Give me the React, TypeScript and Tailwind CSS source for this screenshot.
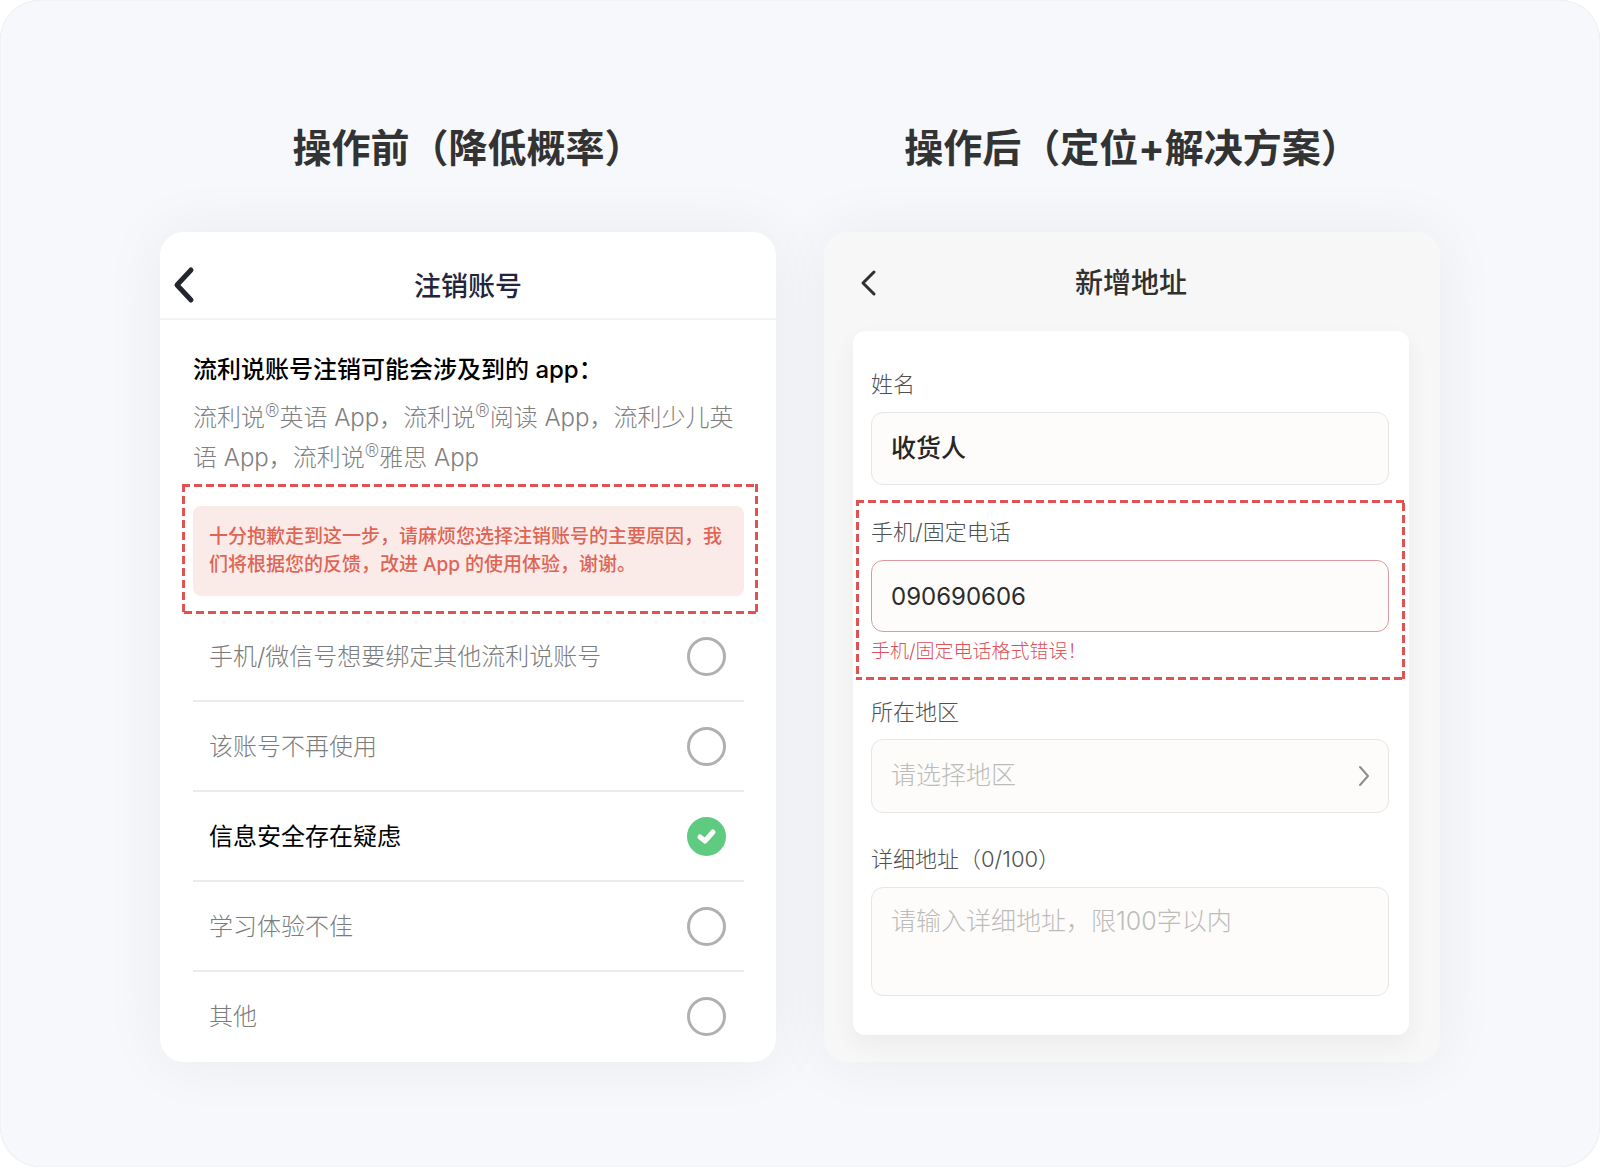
import { useState } from "react";
import type { ReactNode } from "react";

const reasons = [
  "手机/微信号想要绑定其他流利说账号",
  "该账号不再使用",
  "信息安全存在疑虑",
  "学习体验不佳",
  "其他",
];

function Highlight({ className, children }: { className: string; children: ReactNode }) {
  return (
    <div className={`relative ${className}`}>
      <svg className="pointer-events-none absolute inset-0 h-full w-full overflow-hidden" aria-hidden="true">
        <rect width="100%" height="100%" fill="none" stroke="#df5352" strokeWidth="6" strokeDasharray="8 4" />
      </svg>
      {children}
    </div>
  );
}

function Sup() {
  return <sup className="top-0 align-[9px] font-['Roboto',sans-serif] text-lg leading-none">®</sup>;
}

function BeforePanel() {
  const [selected, setSelected] = useState(2);
  return (
    <section className="flex flex-1 flex-col overflow-hidden rounded-3xl bg-white">
      <header className="grid h-22 grid-cols-[1fr_auto_1fr] items-center border-b-2 border-[#f2f3f4] px-3 pt-5">
        <button type="button" aria-label="返回" className="justify-self-start">
          <svg width="24" height="38" viewBox="0 0 24 38" fill="none" stroke="#23262f" strokeWidth="5" strokeLinecap="round" strokeLinejoin="round">
            <path d="M19 4 5 19l14 15" />
          </svg>
        </button>
        <h2 className="pt-1 text-[27px] leading-9 font-medium text-[#23263a]">注销账号</h2>
      </header>
      <div className="px-[33px] pt-8">
        <h3 className="text-2xl leading-9 font-medium text-black">流利说账号注销可能会涉及到的 app：</h3>
        <p className="mt-2.5 text-2xl leading-10 font-light whitespace-nowrap text-[#808080]">
          流利说<Sup />英语 App，流利说<Sup />阅读 App，流利少儿英
          <br />
          语 App，流利说<Sup />雅思 App
        </p>
      </div>
      <Highlight className="mt-[6px] mr-[18px] ml-[22px] pt-[22px] pr-[14px] pb-[18px] pl-[11px]">
        <p className="h-[90px] rounded-lg bg-[#fbebe8] px-4 pt-[17px] text-[19px] leading-7 font-medium text-[#de6556]">
          十分抱歉走到这一步，请麻烦您选择注销账号的主要原因，我们将根据您的反馈，改进 App 的使用体验，谢谢。
        </p>
      </Highlight>
      <div role="radiogroup" aria-label="注销原因" className="pr-8 pl-[33px]">
        {reasons.map((reason, i) => (
          <label
            key={reason}
            className="flex items-center justify-between border-b-2 border-[#ebebeb] pt-[25px] pr-[18px] pb-6 pl-4 text-2xl leading-[39px] font-light text-[#7c7c7c] first:pt-[23px] last:border-0 last:pb-[26px] has-checked:font-normal has-checked:text-black"
          >
            {reason}
            <span className="relative flex h-[39px] items-center">
              <input
                type="radio"
                name="reason"
                checked={selected === i}
                onChange={() => setSelected(i)}
                className="size-[39px] appearance-none rounded-full border-3 border-[#b0b0b0] checked:border-[#5fcb80] checked:bg-[#5fcb80]"
              />
              {selected === i && (
                <svg className="pointer-events-none absolute inset-0" width="39" height="39" viewBox="0 0 39 39" fill="none" stroke="#fff" strokeWidth="5" strokeLinecap="round" strokeLinejoin="round">
                  <path d="m13 20 5 4 8-9" />
                </svg>
              )}
            </span>
          </label>
        ))}
      </div>
    </section>
  );
}

const labelStyle = "block text-[22px] leading-8 font-light text-[#505050]";
const fieldStyle =
  "block w-full appearance-none rounded-xl border bg-[#fdfcfa] px-[19px] outline-none placeholder:text-[#bcbcba] placeholder:opacity-100";

function AfterPanel() {
  return (
    <section className="flex flex-1 flex-col rounded-3xl bg-[#f7f7f7] pr-[31px] pb-[27px] pl-[29px]">
      <header className="grid h-[99px] grid-cols-[1fr_auto_1fr] items-center px-1.5 pt-0.5">
        <button type="button" aria-label="返回" className="justify-self-start">
          <svg width="22" height="32" viewBox="0 0 22 32" fill="none" stroke="#303030" strokeWidth="3" strokeLinecap="round" strokeLinejoin="round">
            <path d="M15 5 4 16l11 11" />
          </svg>
        </button>
        <h2 className="text-[28px] leading-10 font-medium text-[#303030]">新增地址</h2>
      </header>
      <form className="rounded-xl bg-white pt-[37px] pb-[39px] shadow-[0_10px_24px_rgba(0,0,0,0.05)]">
        <div className="pr-5 pl-[18px]">
          <label htmlFor="name" className={labelStyle}>姓名</label>
          <input id="name" type="text" defaultValue="收货人" className={`${fieldStyle} mt-3 h-[73px] border-[#e6e6e4] pb-1.5 text-[25px] font-medium text-[#262626]`} />
        </div>
        <Highlight className="mt-[15px] mr-1 ml-[3px] pt-4 pr-4 pb-[14px] pl-[15px]">
          <label htmlFor="phone" className={labelStyle}>手机/固定电话</label>
          <input
            id="phone"
            type="tel"
            defaultValue="090690606"
            aria-invalid="true"
            aria-describedby="phone-error"
            className={`${fieldStyle} mt-3 h-[72px] border-[#dc99a2] text-2xl text-[#2c2c2c]`}
          />
          <p id="phone-error" className="mt-1.5 text-[19px] leading-7 font-light text-[#dc5058]">手机/固定电话格式错误！</p>
        </Highlight>
        <div className="mt-4 pr-5 pl-[18px]">
          <label htmlFor="region" className={labelStyle}>所在地区</label>
          <div className="relative mt-[11px]">
            <select id="region" defaultValue="" className={`${fieldStyle} h-[74px] border-[#e6e6e4] text-[25px] font-light text-[#bcbcba]`}>
              <option value="">请选择地区</option>
            </select>
            <svg className="pointer-events-none absolute top-1/2 right-4 -translate-y-1/2" width="18" height="24" viewBox="0 0 18 24" fill="none" stroke="#8c8c8c" strokeWidth="2" strokeLinecap="round" strokeLinejoin="round">
              <path d="m5 3 8 9-8 9" />
            </svg>
          </div>
        </div>
        <div className="mt-[30px] pr-5 pl-[18px]">
          <label htmlFor="address" className={labelStyle}>详细地址（0/100）</label>
          <textarea
            id="address"
            maxLength={100}
            placeholder="请输入详细地址，限100字以内"
            className={`${fieldStyle} mt-3 h-[109px] resize-none border-[#e6e6e4] pt-[15px] text-[25px] leading-9 font-light text-[#2c2c2c]`}
          />
        </div>
      </form>
    </section>
  );
}

function Column({ title, children }: { title: string; children: ReactNode }) {
  return (
    <div className="flex flex-1 flex-col gap-14">
      <h1 className="text-center text-[39px] leading-14 font-bold text-[#333]">{title}</h1>
      <div className="flex flex-1 flex-col rounded-3xl shadow-[0_0_64px_rgba(0,0,0,0.06)]">{children}</div>
    </div>
  );
}

export default function App() {
  return (
    <div className="min-h-screen bg-white font-['Inter','Noto_Sans_CJK_SC',sans-serif]" lang="zh-CN">
      <main className="flex min-h-screen gap-12 rounded-[40px] bg-[#f6f8fc] px-40 pt-[120px] pb-[105px] shadow-[inset_0_0_1px_rgba(0,0,0,0.2)]">
        <Column title="操作前（降低概率）">
          <BeforePanel />
        </Column>
        <Column title="操作后（定位+解决方案）">
          <AfterPanel />
        </Column>
      </main>
    </div>
  );
}
